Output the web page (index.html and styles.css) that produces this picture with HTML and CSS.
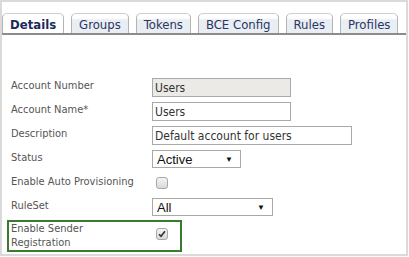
FILE: index.html
```html
<!DOCTYPE html>
<html lang="en">
<head>
  <meta charset="UTF-8" />
  <title>Account Details</title>
  <link rel="stylesheet" href="styles.css">
</head>
<body>

<div class="panel">
  <ul class="tabs">
    <li class="tab active">Details</li>
    <li class="tab">Groups</li>
    <li class="tab">Tokens</li>
    <li class="tab">BCE Config</li>
    <li class="tab">Rules</li>
    <li class="tab">Profiles</li>
  </ul>

  <div class="form">
    <div class="row">
      <label>Account Number</label>
      <input class="field readonly" type="text" value="Users" readonly>
    </div>
    <div class="row">
      <label>Account Name*</label>
      <input class="field" type="text" value="Users">
    </div>
    <div class="row">
      <label>Description</label>
      <input class="field wide" type="text" value="Default account for users">
    </div>
    <div class="row">
      <label>Status</label>
      <div class="select status"><span>Active</span><span class="arrow">&#9660;</span></div>
    </div>
    <div class="row">
      <label>Enable Auto Provisioning</label>
      <span class="check"></span>
    </div>
    <div class="row">
      <label>RuleSet</label>
      <div class="select ruleset"><span>All</span><span class="arrow">&#9660;</span></div>
    </div>
    <div class="row highlight">
      <label>Enable Sender<br>Registration</label>
      <span class="check checked">
        <svg width="8" height="8" viewBox="0 0 8 8"><path d="M1 4.2 L3 6.3 L7 1.2" fill="none" stroke="#333" stroke-width="1.6"/></svg>
      </span>
    </div>
  </div>
</div>

</body>
</html>
```

FILE: styles.css
```css
body {
  margin: 0;
  background: #ffffff;
  font-family: "DejaVu Sans Condensed", "DejaVu Sans", sans-serif;
}

.panel {
  width: 408px;
  height: 256px;
  box-sizing: border-box;
  border: 2px solid #dadada;
  overflow: hidden;
}

.tabs {
  list-style: none;
  margin: 11px 0 0 0;
  padding: 0;
  display: flex;
  gap: 7px;
  border-bottom: 2px solid #8c8c8c;
}

.tab {
  height: 19px;
  padding: 0 7px;
  white-space: nowrap;
  flex-shrink: 0;
  font-size: 13px;
  line-height: 21px;
  color: #2c365e;
  border: 1px solid #b4b4b4;
  border-bottom: none;
  border-top-color: #cfcfcf;
  border-radius: 5px 5px 0 0;
  background: linear-gradient(#ffffff 0, #ffffff 4px, #e9edf4 6px, #e9edf4 100%);
}

.tab.active {
  font-weight: bold;
  color: #1c2a58;
  background: #ffffff;
}

.form {
  padding: 43px 0 0 9px;
}

.row {
  display: grid;
  grid-template-columns: 141px auto;
  align-items: start;
  height: 24px;
}

.row label {
  font-size: 11px;
  line-height: 14px;
  padding-top: 1px;
  color: #555555;
}

.field {
  width: 139px;
  height: 19px;
  box-sizing: border-box;
  margin: 0;
  padding: 0 2px;
  border: 1px solid #a9a9a9;
  font-family: inherit;
  font-size: 12px;
  color: #333333;
  background: #ffffff;
}

.field.readonly {
  background: #ebeae6;
}

.field.wide {
  width: 200px;
}

.select {
  height: 18px;
  box-sizing: border-box;
  border: 1px solid #a9a9a9;
  padding: 0 4px;
  display: flex;
  justify-content: space-between;
  align-items: center;
  font-family: "Liberation Sans", Arial, sans-serif;
  font-size: 13px;
  color: #111111;
  background: #ffffff;
}

.select.status {
  width: 89px;
}

.select.ruleset {
  width: 121px;
}

.select .arrow {
  font-size: 8px;
  color: #111111;
  padding-right: 3px;
}

.check {
  width: 12px;
  height: 12px;
  box-sizing: border-box;
  margin: 3px 0 0 4px;
  border: 1px solid #a8a8a8;
  border-radius: 3px;
  background: linear-gradient(#f4f4f4, #d9d9d9);
  display: flex;
  align-items: center;
  justify-content: center;
}

.highlight {
  width: 175px;
  height: auto;
  box-sizing: border-box;
  margin: -2px 0 0 -4px;
  padding-left: 2px;
  border: 2px solid #3a7a30;
  grid-template-columns: 141px auto;
}

.highlight label {
  padding-top: 0;
}

.highlight .check {
  margin-top: 6px;
}
```
